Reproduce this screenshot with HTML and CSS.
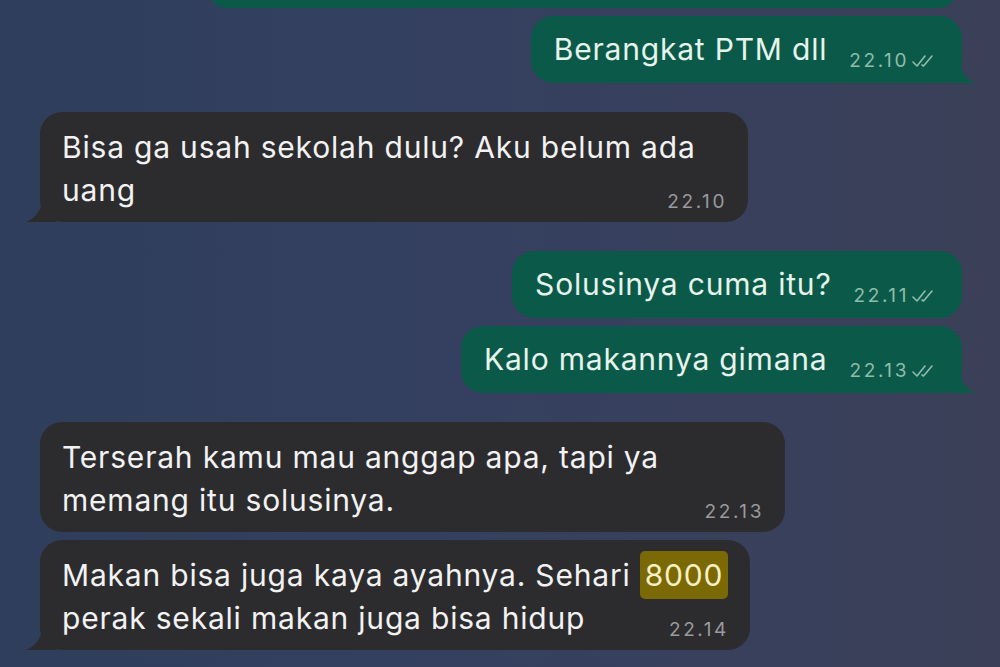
FILE: index.html
```html
<!DOCTYPE html>
<html>
<head>
    <title>Chat</title>
    <link rel="stylesheet" href="styles.css">
</head>
<body>
    <div class="chat">
        <div class="bubble out partial"></div>

        <div class="bubble out tail gap-s">
            <span class="text">Berangkat PTM dll</span>
            <span class="meta">22.10
                <svg class="ticks" viewBox="0 0 26 16"><path d="M2 9l4 4L14 3M11 12l1.5 1L21 3"/></svg>
            </span>
        </div>

        <div class="bubble in tail gap-l multi w-sekolah">
            <div class="text">Bisa ga usah sekolah dulu? Aku belum ada<br>uang</div>
            <div class="meta">22.10</div>
        </div>

        <div class="bubble out gap-l">
            <span class="text">Solusinya cuma itu?</span>
            <span class="meta">22.11
                <svg class="ticks" viewBox="0 0 26 16"><path d="M2 9l4 4L14 3M11 12l1.5 1L21 3"/></svg>
            </span>
        </div>

        <div class="bubble out tail gap-s">
            <span class="text">Kalo makannya gimana</span>
            <span class="meta">22.13
                <svg class="ticks" viewBox="0 0 26 16"><path d="M2 9l4 4L14 3M11 12l1.5 1L21 3"/></svg>
            </span>
        </div>

        <div class="bubble in gap-l multi w-terserah">
            <div class="text">Terserah kamu mau anggap apa, tapi ya<br>memang itu solusinya.</div>
            <div class="meta">22.13</div>
        </div>

        <div class="bubble in tail gap-s multi w-makan">
            <div class="text">Makan bisa juga kaya ayahnya. Sehari <span class="mark">8000</span><br>perak sekali makan juga bisa hidup</div>
            <div class="meta">22.14</div>
        </div>
    </div>
</body>
</html>
```

FILE: styles.css
```css
body {
    margin: 0;
    height: 667px;
    overflow: hidden;
    font-family: Inter, "Noto Sans", sans-serif;
    background: linear-gradient(90deg, #2e3e5b 0%, #354060 45%, #3b4058 100%);
}
.chat {
    display: flex;
    flex-direction: column;
    padding: 0 38px 0 40px;
}
.bubble {
    position: relative;
    border-radius: 22px;
    font-size: 30px;
    letter-spacing: 0.8px;
}
.gap-s {
    margin-top: 8px;
}
.gap-l {
    margin-top: 29px;
}
.out {
    align-self: flex-end;
    display: flex;
    align-items: flex-end;
    background: #0b5a49;
    color: #e6f4ec;
    padding: 12px 25px 12px 23px;
}
.in {
    align-self: flex-start;
    background: #2c2c2e;
    color: #f2f2f2;
}
.partial {
    width: 745px;
    height: 30px;
    margin-top: -22px;
    margin-right: 7px;
    padding: 0;
}
.text {
    line-height: 43px;
}
.out .meta {
    display: flex;
    align-items: center;
    margin-left: 22px;
    font-size: 19px;
    line-height: 20px;
    color: #8fbcab;
    letter-spacing: 2.6px;
}
.ticks {
    width: 26px;
    height: 16px;
    margin-left: 2px;
    fill: none;
    stroke: #8fbcab;
    stroke-width: 1.6;
    stroke-linecap: round;
    stroke-linejoin: round;
}
.multi {
    box-sizing: border-box;
    padding: 14px 21px 10px 22px;
}
.multi .meta {
    margin-top: -20px;
    text-align: right;
    font-size: 19px;
    line-height: 20px;
    color: #9a9a9e;
    letter-spacing: 2.6px;
}
.w-sekolah {
    width: 708px;
}
.w-terserah {
    width: 745px;
}
.w-makan {
    width: 710px;
}
.mark {
    background: #7a6905;
    color: #f6f0c4;
    border-radius: 5px;
    padding: 6px 5px;
}

/* bubble tails */
.tail::after {
    content: "";
    position: absolute;
    bottom: 0;
    width: 30px;
    height: 24px;
}
.out.tail::after {
    right: -14px;
    background: #0b5a49;
    clip-path: path('M0 0 H14 C14 12 20 20 30 24 H0 Z');
}
.in.tail::after {
    left: -14px;
    background: #2c2c2e;
    clip-path: path('M30 0 H16 C16 12 10 20 0 24 H30 Z');
}
```
